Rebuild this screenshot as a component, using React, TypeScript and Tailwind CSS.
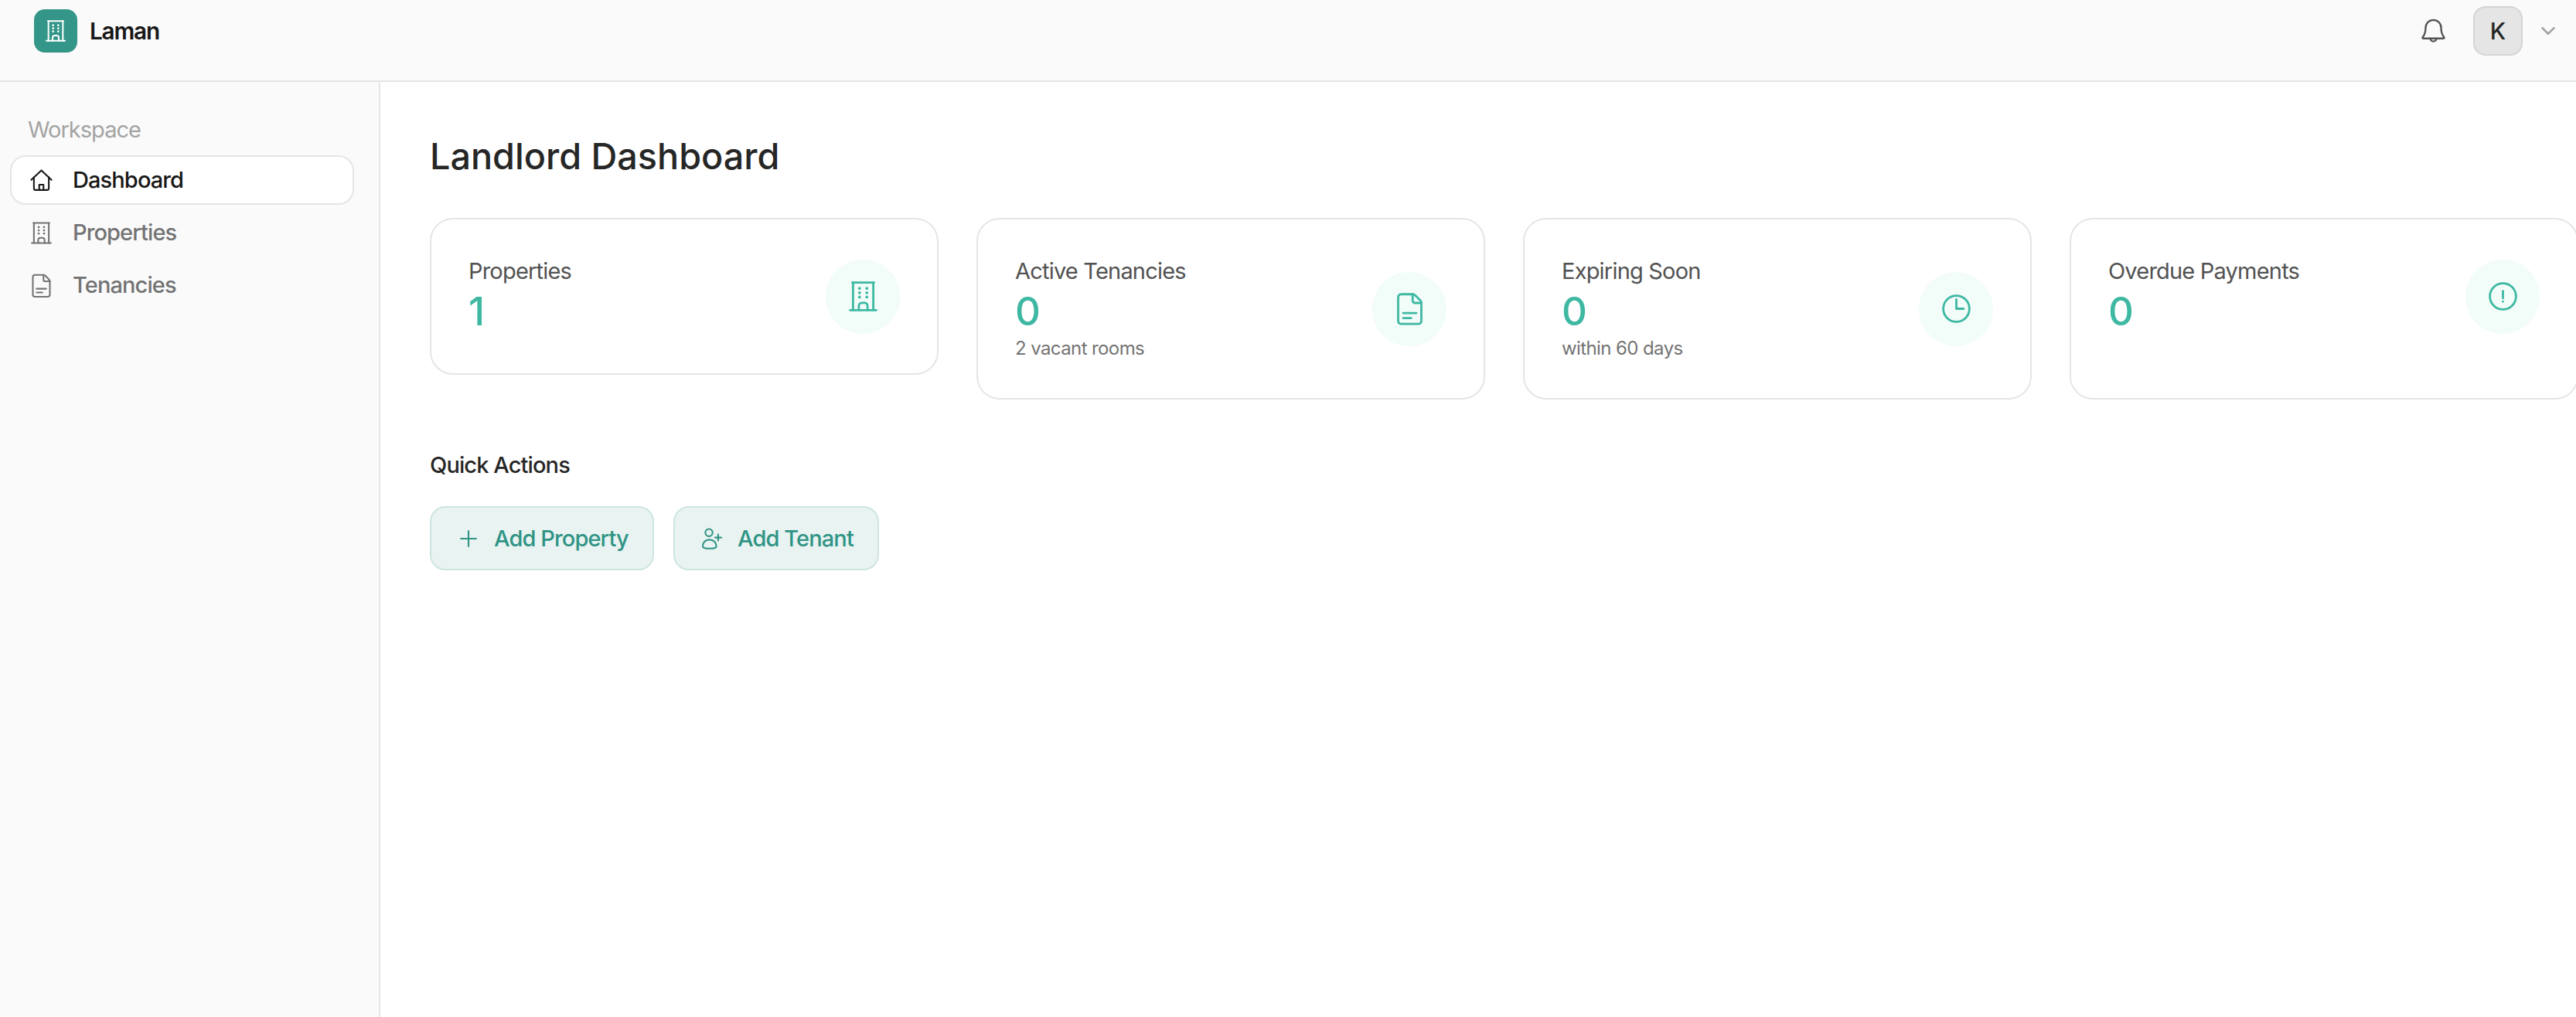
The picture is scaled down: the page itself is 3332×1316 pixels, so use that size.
import { ChevronDown, Plus } from "lucide-react";

function BuildingIcon({ className }: { className?: string }) {
  return (
    <svg viewBox="0 0 24 24" fill="none" stroke="currentColor" strokeWidth="1.5" strokeLinecap="round" className={className}>
      <path d="M3 21.5h18" />
      <path d="M4.5 2.5h15" />
      <path d="M5 2.5v19M19 2.5v19" />
      <path d="M9 21.5v-3a2 2 0 0 1 2-2h2a2 2 0 0 1 2 2v3" />
      <path d="M9.5 6.5h.01M14.5 6.5h.01M9.5 9.5h.01M14.5 9.5h.01M9.5 12.5h.01M14.5 12.5h.01" strokeWidth="2" />
    </svg>
  );
}

function HomeIcon({ className }: { className?: string }) {
  return (
    <svg viewBox="0 0 24 24" fill="none" stroke="currentColor" strokeWidth="1.5" strokeLinecap="round" strokeLinejoin="round" className={className}>
      <path d="M2.5 11.5 12 2.5l9.5 9" />
      <path d="M5 9v10.5A1.5 1.5 0 0 0 6.5 21h11a1.5 1.5 0 0 0 1.5-1.5V9" />
      <path d="M10 21v-5h4v5" />
    </svg>
  );
}

function FileIcon({ className }: { className?: string }) {
  return (
    <svg viewBox="0 0 24 24" fill="none" stroke="currentColor" strokeWidth="1.5" strokeLinecap="round" strokeLinejoin="round" className={className}>
      <path d="M6 22.5a2 2 0 0 1-2-2V4a2 2 0 0 1 2-2h8a2.4 2.4 0 0 1 1.7.7l3.6 3.6A2.4 2.4 0 0 1 20 8v12.5a2 2 0 0 1-2 2z" />
      <path d="M14 2v4.5a1.5 1.5 0 0 0 1.5 1.5H20" />
      <path d="M7.5 15h9M7.5 18.5h5.5" />
    </svg>
  );
}

function ClockIcon({ className }: { className?: string }) {
  return (
    <svg viewBox="0 0 24 24" fill="none" stroke="currentColor" strokeWidth="1.5" strokeLinecap="round" strokeLinejoin="round" className={className}>
      <circle cx="12" cy="12" r="9" />
      <path d="M12 5.5V12h5" />
    </svg>
  );
}

function AlertIcon({ className }: { className?: string }) {
  return (
    <svg viewBox="0 0 24 24" fill="none" stroke="currentColor" strokeWidth="1.5" strokeLinecap="round" strokeLinejoin="round" className={className}>
      <circle cx="12" cy="12" r="9" />
      <path d="M12 8.3v5M12 15.6h.01" />
    </svg>
  );
}

function BellIcon({ className }: { className?: string }) {
  return (
    <svg viewBox="0 0 24 24" fill="none" stroke="currentColor" strokeWidth="1.5" strokeLinecap="round" strokeLinejoin="round" className={className}>
      <path d="M12 2.5A6.5 6.5 0 0 0 5.5 9c0 4.5-1 6.2-2.5 8a.6.6 0 0 0 .5 1h17a.6.6 0 0 0 .5-1c-1.5-1.8-2.5-3.5-2.5-8A6.5 6.5 0 0 0 12 2.5z" />
      <path d="M9.5 18a2.5 2.5 0 0 0 5 0" />
    </svg>
  );
}

function TenantIcon({ className }: { className?: string }) {
  return (
    <svg viewBox="0 0 24 24" fill="none" stroke="currentColor" strokeWidth="1.5" strokeLinecap="round" strokeLinejoin="round" className={className}>
      <circle cx="9.2" cy="6.5" r="3.3" />
      <path d="M3.5 19c0-3.5 2.5-6 6.2-6s6.2 2.5 6.2 6c0 1.2-2.5 2-6.2 2s-6.2-.8-6.2-2z" />
      <path d="M17.6 8.2v5.6M14.8 11h5.6" />
    </svg>
  );
}

const nav = [
  { label: "Dashboard", icon: <HomeIcon className="w-[33px] h-[33px]" />, active: true },
  { label: "Properties", icon: <BuildingIcon className="w-[33px] h-[33px]" />, active: false },
  { label: "Tenancies", icon: <FileIcon className="w-[33px] h-[33px]" />, active: false },
];

function StatCard({ label, value, sub, icon, stretch }: { label: string; value: string; sub?: string; icon: React.ReactNode; stretch?: boolean }) {
  return (
    <div className={`bg-white border-2 border-[#e5e5e5] rounded-[30px] p-[48px] ${stretch ? "self-stretch" : ""}`}>
      <div className="flex items-center justify-between">
        <div>
          <p className="text-[29px] leading-[37px] tracking-[-0.8px] font-normal text-[#525252]">{label}</p>
          <p className="text-[51px] leading-[64px] pt-[2px] font-medium text-[#3eb8a3]">{value}</p>
          {sub && <p className="text-[24px] leading-[32px] tracking-[-0.6px] text-[#737373]">{sub}</p>}
        </div>
        <div className="w-[96px] h-[96px] rounded-full bg-[#f2fcf9] flex items-center justify-center text-[#3eb8a3]">
          {icon}
        </div>
      </div>
    </div>
  );
}

export default function App() {
  return (
    <div className="w-[3332px] h-[1316px] overflow-hidden flex flex-col bg-white text-[#171717] font-['Inter',sans-serif]">
      <header className="h-[106px] shrink-0 bg-[#fafafa] border-b-2 border-[#e5e5e5] flex items-start justify-between pl-[44px] pr-[21px] pt-[8px]">
        <div className="flex items-center gap-[16px] pt-[4px]">
          <div className="w-[56px] h-[56px] rounded-[14px] bg-[#339688] text-white flex items-center justify-center">
            <BuildingIcon className="w-[32px] h-[32px]" />
          </div>
          <span className="text-[29.75px] font-semibold tracking-[-1.2px] text-[#171717]">Laman</span>
        </div>
        <div className="flex items-center">
          <BellIcon className="w-[37px] h-[37px] text-[#525252] mr-[33px]" />
          <div className="w-[64px] h-[64px] rounded-[16px] bg-[#e5e5e5] border-2 border-[#d4d4d4] flex items-center justify-center text-[29.75px] font-medium text-[#262626]">
            K
          </div>
          <ChevronDown className="w-[30px] h-[30px] text-[#a3a3a3] ml-[18px]" strokeWidth={2} />
        </div>
      </header>

      <div className="flex flex-1 min-h-0">
        <aside className="w-[492px] shrink-0 bg-[#fafafa] border-r-2 border-[#e5e5e5] pt-[38px] px-[13px]">
          <p className="pl-[23px] text-[29px] leading-[48px] tracking-[-1px] text-[#a3a3a3] mb-[9px]">Workspace</p>
          <nav className="flex flex-col gap-[4px]">
            {nav.map((item) => (
              <div
                key={item.label}
                className={`h-[64px] w-[445px] flex items-center gap-[24px] pl-[22px] rounded-[20px] border-2 text-[29px] tracking-[-0.9px] font-medium ${
                  item.active ? "bg-white border-[#e5e5e5] text-[#171717]" : "border-transparent text-[#737373]"
                }`}
              >
                {item.icon}
                <span>{item.label}</span>
              </div>
            ))}
          </nav>
        </aside>

        <main className="flex-1 min-w-0 pl-[64px] pt-[64px]">
          <h1 className="text-[46.75px] leading-[64px] font-medium text-[#262626] mb-[48px]">Landlord Dashboard</h1>
          <div className="w-[2782px] grid grid-cols-[repeat(4,658px)] gap-x-[49px] items-start">
            <StatCard label="Properties" value="1" icon={<BuildingIcon className="w-[45px] h-[45px]" />} />
            <StatCard label="Active Tenancies" value="0" sub="2 vacant rooms" icon={<FileIcon className="w-[45px] h-[45px]" />} />
            <StatCard label="Expiring Soon" value="0" sub="within 60 days" icon={<ClockIcon className="w-[45px] h-[45px]" />} />
            <StatCard label="Overdue Payments" value="0" stretch icon={<AlertIcon className="w-[45px] h-[45px]" />} />
          </div>
          <h2 className="mt-[66px] text-[29px] leading-[38px] tracking-[-0.9px] font-medium text-[#262626] mb-[34px]">Quick Actions</h2>
          <div className="flex gap-[25px]">
            <button className="w-[290px] h-[83px] flex items-center gap-[16px] pl-[31px] rounded-[20px] bg-[#e9f3f2] border-2 border-[#cde5e1] text-[#2f9485] text-[29px] tracking-[-0.9px] font-medium">
              <Plus className="w-[34px] h-[34px]" strokeWidth={1.5} />
              Add Property
            </button>
            <button className="w-[266px] h-[83px] flex items-center gap-[16px] pl-[31px] rounded-[20px] bg-[#e9f3f2] border-2 border-[#cde5e1] text-[#2f9485] text-[29px] tracking-[-0.9px] font-medium">
              <TenantIcon className="w-[34px] h-[34px]" />
              Add Tenant
            </button>
          </div>
        </main>
      </div>
    </div>
  );
}
